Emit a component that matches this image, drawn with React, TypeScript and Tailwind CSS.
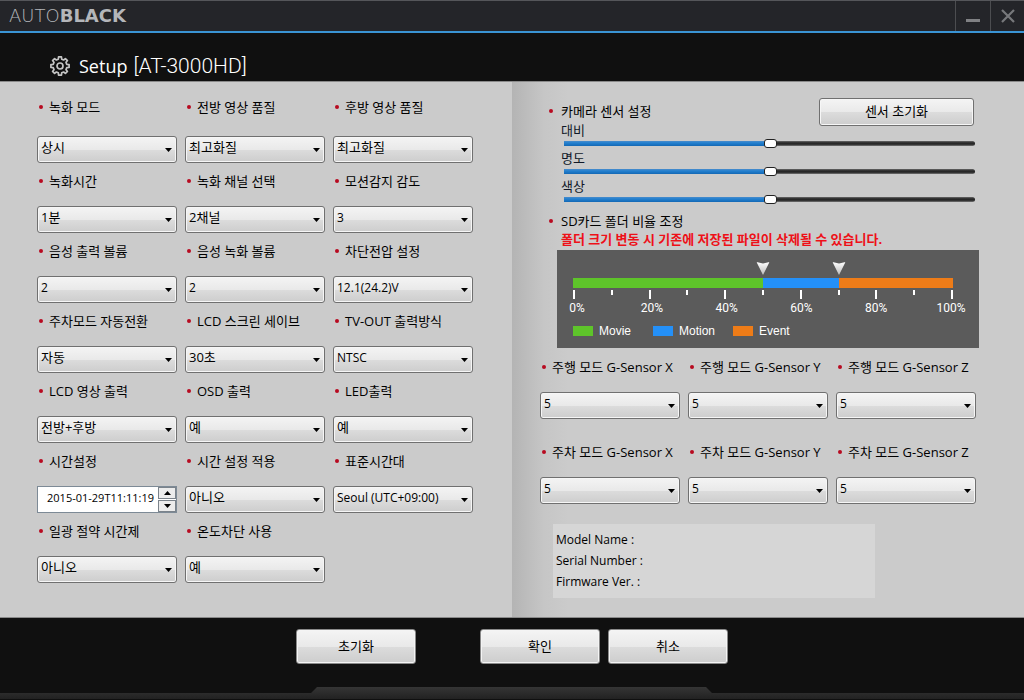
import { useId, useState } from 'react';

type Field = { label: string; options: string[] };

const LEFT_FIELDS: (Field | 'time')[] = [
  { label: '녹화 모드', options: ['상시', '이벤트'] },
  { label: '전방 영상 품질', options: ['최고화질', '고화질', '일반화질'] },
  { label: '후방 영상 품질', options: ['최고화질', '고화질', '일반화질'] },
  { label: '녹화시간', options: ['1분', '2분', '3분'] },
  { label: '녹화 채널 선택', options: ['2채널', '1채널'] },
  { label: '모션감지 감도', options: ['3', '1', '2', '4', '5'] },
  { label: '음성 출력 볼륨', options: ['2', '0', '1', '3'] },
  { label: '음성 녹화 볼륨', options: ['2', '0', '1', '3'] },
  { label: '차단전압 설정', options: ['12.1(24.2)V', '11.8(23.6)V'] },
  { label: '주차모드 자동전환', options: ['자동', '수동'] },
  { label: 'LCD 스크린 세이브', options: ['30초', '60초'] },
  { label: 'TV-OUT 출력방식', options: ['NTSC', 'PAL'] },
  { label: 'LCD 영상 출력', options: ['전방+후방', '전방', '후방'] },
  { label: 'OSD 출력', options: ['예', '아니오'] },
  { label: 'LED출력', options: ['예', '아니오'] },
  'time',
  { label: '시간 설정 적용', options: ['아니오', '예'] },
  { label: '표준시간대', options: ['Seoul (UTC+09:00)', 'London (UTC+00:00)'] },
  { label: '일광 절약 시간제', options: ['아니오', '예'] },
  { label: '온도차단 사용', options: ['예', '아니오'] },
];

const LEVELS = ['5', '1', '2', '3', '4'];
const DRIVING = ['주행 모드 G-Sensor X', '주행 모드 G-Sensor Y', '주행 모드 G-Sensor Z'];
const PARKING = ['주차 모드 G-Sensor X', '주차 모드 G-Sensor Y', '주차 모드 G-Sensor Z'];

const BUTTON_FACE =
  'bg-[linear-gradient(to_bottom,#f4f4f4_0%,#e9e9e9_50%,#dcdcdc_51%,#cdcdcd_100%)]';

function Bullet() {
  return <span className="size-1 shrink-0 rounded-full bg-[#b80a20]" />;
}

function SelectField({ label, options }: Field) {
  const id = useId();
  const hangul = /[가-힣]/.test(options[0]);
  return (
    <div className="flex min-w-0 flex-col gap-4">
      <label htmlFor={id} className="flex items-center gap-1.5 pl-0.5 text-[13px] leading-[18px] whitespace-nowrap">
        <Bullet />
        {label}
      </label>
      <div className="relative">
        <select
          id={id}
          className={`block h-[27px] w-full appearance-none rounded-[3px] border border-[#707070] pr-4 pb-[3px] pl-[3px] shadow-[inset_0_0_0_1px_#f6f6f6] ${BUTTON_FACE} ${hangul ? 'text-[13px]' : 'text-xs'}`}
        >
          {options.map((o) => (
            <option key={o}>{o}</option>
          ))}
        </select>
        <svg viewBox="0 0 7 4" className="pointer-events-none absolute top-3 right-[5px] h-1 w-[7px]">
          <path d="M0 0H7L3.5 4Z" fill="#000" />
        </svg>
      </div>
    </div>
  );
}

function TimeField() {
  const id = useId();
  return (
    <div className="flex min-w-0 flex-col gap-4">
      <label htmlFor={id} className="flex items-center gap-1.5 pl-0.5 text-[13px] leading-[18px] whitespace-nowrap">
        <Bullet />
        시간설정
      </label>
      <div className="flex h-[27px] border border-[#7d8a96] bg-white">
        <input
          id={id}
          type="text"
          defaultValue="2015-01-29T11:11:19"
          className="min-w-0 flex-1 bg-white pr-1 pb-[3px] text-right text-[11px] outline-none"
        />
        <div className="flex w-[18px] flex-col gap-px bg-white">
          <button aria-label="시간 증가" className="flex flex-1 items-center justify-center border border-[#7b838b] bg-[#ececec]">
            <svg viewBox="0 0 7 4" className="h-1 w-[7px]">
              <path d="M0 4H7L3.5 0Z" fill="#000" />
            </svg>
          </button>
          <button aria-label="시간 감소" className="flex flex-1 items-center justify-center border border-[#7b838b] bg-[#ececec]">
            <svg viewBox="0 0 7 4" className="h-1 w-[7px]">
              <path d="M0 0H7L3.5 4Z" fill="#000" />
            </svg>
          </button>
        </div>
      </div>
    </div>
  );
}

function SensorSlider({ label }: { label: string }) {
  const id = useId();
  const [value, setValue] = useState(50);
  return (
    <div className="flex flex-col gap-px">
      <label htmlFor={id} className="text-[13px] leading-4 text-[#101828]">
        {label}
      </label>
      <div className="relative flex h-[9px] items-center pr-px pl-[3px]">
        <div className="flex h-[5px] flex-1 rounded-r-full bg-[linear-gradient(to_bottom,#6b6b6b,#222_40%,#333_70%,#777)]">
          <div
            className="bg-[linear-gradient(to_bottom,#4a8ccb,#2280d0_40%,#1468b4)]"
            style={{ width: `${value}%` }}
          />
        </div>
        <input
          id={id}
          type="range"
          value={value}
          onChange={(e) => setValue(Number(e.target.value))}
          className="absolute inset-y-0 right-0 left-[3px] m-0 h-[9px] appearance-none bg-transparent [&::-webkit-slider-thumb]:h-[9px] [&::-webkit-slider-thumb]:w-[13px] [&::-webkit-slider-thumb]:appearance-none [&::-webkit-slider-thumb]:rounded-[3px] [&::-webkit-slider-thumb]:border [&::-webkit-slider-thumb]:border-[#222] [&::-webkit-slider-thumb]:bg-white"
        />
      </div>
    </div>
  );
}

function Marker({ className }: { className: string }) {
  return (
    <svg viewBox="0 0 13 13" className={`absolute top-3 size-[13px] -translate-x-1/2 ${className}`}>
      <defs>
        <linearGradient id="marker" x1="0" y1="0" x2="0" y2="1">
          <stop offset="0" stopColor="#fff" />
          <stop offset="1" stopColor="#bbb" />
        </linearGradient>
      </defs>
      <path d="M0 0L6.5 1.5L13 0L6.5 13Z" fill="url(#marker)" />
    </svg>
  );
}

function FolderRatio() {
  return (
    <div className="relative mt-0.5 flex h-[98px] flex-col bg-[#5b5b5b] pt-7 text-white">
      <div className="absolute inset-x-0 top-0 mr-[26px] ml-4">
        <Marker className="left-1/2" />
        <Marker className="left-[70%]" />
      </div>
      <div className="mr-[26px] ml-4 flex h-[10px]">
        <div className="w-1/2 bg-[#5ec42a]" />
        <div className="w-1/5 bg-[#2490f8]" />
        <div className="flex-1 bg-[#ee7c18]" />
      </div>
      <div className="mt-0.5 mr-[26px] ml-4 flex h-[9px] justify-between">
        {Array.from({ length: 11 }, (_, i) => (
          <span key={i} className={`w-0.5 bg-white ${i % 2 ? 'h-[5px]' : 'h-[9px]'}`} />
        ))}
      </div>
      <div className="mt-px mr-3 ml-1 flex justify-between font-['Roboto',sans-serif] text-xs leading-4">
        {[0, 20, 40, 60, 80, 100].map((n) => (
          <span key={n} className="w-8 text-center">
            {n}%
          </span>
        ))}
      </div>
      <div className="mt-2 ml-4 flex font-['Liberation_Sans',sans-serif] text-xs leading-[14px]">
        <span className="flex w-20 items-center gap-1.5">
          <i className="h-[10px] w-5 bg-[#5ec42a]" />
          Movie
        </span>
        <span className="flex w-20 items-center gap-1.5">
          <i className="h-[10px] w-5 bg-[#2490f8]" />
          Motion
        </span>
        <span className="flex w-20 items-center gap-1.5">
          <i className="h-[10px] w-5 bg-[#ee7c18]" />
          Event
        </span>
      </div>
    </div>
  );
}

function gearPath() {
  const points: string[] = [];
  for (let i = 0; i < 8; i++) {
    const steps: [number, number][] = [
      [-14, 7],
      [-9, 9.2],
      [9, 9.2],
      [14, 7],
    ];
    for (const [offset, radius] of steps) {
      const a = ((i * 45 + offset) * Math.PI) / 180;
      points.push(`${(10 + radius * Math.sin(a)).toFixed(2)} ${(10 - radius * Math.cos(a)).toFixed(2)}`);
    }
  }
  return `M${points.join('L')}Z`;
}

function Gear() {
  return (
    <svg viewBox="0 0 20 20" className="size-5" fill="none" stroke="#c4c4c4" strokeWidth="1.7" strokeLinejoin="round">
      <path d={gearPath()} />
      <circle cx="10" cy="10" r="3" />
    </svg>
  );
}

function FooterButton({ children }: { children: string }) {
  return (
    <button className={`h-[35px] w-[120px] rounded-[3px] border border-[#8a8a8a] text-[13px] shadow-[inset_0_0_0_1px_#f4f4f4] ${BUTTON_FACE}`}>
      {children}
    </button>
  );
}

export default function App() {
  return (
    <div className="flex min-h-screen flex-col bg-[#101010] font-['Open_Sans','Noto_Sans_CJK_KR',sans-serif] text-black">
      <header className="flex h-[33px] border-t border-b-2 border-t-[#55565a] border-b-[#3a94d4] bg-[#242529]">
        <div className="flex flex-1 items-center pb-px pl-[9px] font-['DejaVu_Sans',sans-serif] text-lg leading-5 text-[#b4b6ba]">
          <span className="font-extralight">AUTO</span>
          <span className="font-bold">BLACK</span>
        </div>
        <button aria-label="최소화" className="flex w-[35px] items-center justify-center border-l border-[#4c4d50]">
          <svg viewBox="0 0 14 14" className="mt-1 size-[14px]">
            <path d="M0 8H14V11H0Z" fill="#808184" />
          </svg>
        </button>
        <button aria-label="닫기" className="flex w-[34px] items-center justify-center border-l border-[#4c4d50]">
          <svg viewBox="0 0 14 14" className="size-[14px]">
            <path d="M1 1L13 13M13 1L1 13" stroke="#77787b" strokeWidth="2.2" />
          </svg>
        </button>
      </header>

      <div className="flex h-12 items-end gap-[9px] pb-[5px] pl-[50px] text-white">
        <Gear />
        <h1 className="flex items-baseline gap-1.5 text-lg leading-5">
          <span>Setup</span>
          <span className="font-['Roboto',sans-serif] text-[21px] leading-5 font-light">[AT-3000HD]</span>
        </h1>
      </div>

      <main className="flex flex-1 border-y border-[#8a8a8a] bg-[#cbcbcb]">
        <section className="w-1/2 pt-4 pr-[39px] pl-[37px]">
          <div className="grid grid-cols-3 gap-x-2 gap-y-[9px] [&>*:nth-child(-n+3)]:gap-5">
            {LEFT_FIELDS.map((f) => (f === 'time' ? <TimeField key="time" /> : <SelectField key={f.label} {...f} />))}
          </div>
        </section>

        <section className="w-1/2 bg-[linear-gradient(to_right,#b4b4b4,#c6c6c6_32px,#cbcbcb_56px)] pt-4 pr-[45px] pl-7">
          <div className="flex items-start justify-between pr-[5px] pl-[9px]">
            <h2 className="flex items-center gap-2 pt-1 text-[13px] leading-[18px]">
              <Bullet />
              카메라 센서 설정
            </h2>
            <button className={`h-7 w-[155px] rounded-[3px] border border-[#707070] text-[13px] shadow-[inset_0_0_0_1px_#f6f6f6] ${BUTTON_FACE}`}>
              센서 초기화
            </button>
          </div>
          <div className="-mt-1 flex flex-col gap-0.5 pr-[3px] pl-[21px]">
            <SensorSlider label="대비" />
            <SensorSlider label="명도" />
            <SensorSlider label="색상" />
          </div>
          <h2 className="mt-2 flex items-center gap-2 pl-[9px] text-[13px] leading-[18px]">
            <Bullet />
            SD카드 폴더 비율 조정
          </h2>
          <p className="pl-[21px] text-[13px] leading-[18px] font-bold text-[#ee1018]">
            폴더 크기 변동 시 기존에 저장된 파일이 삭제될 수 있습니다.
          </p>
          <div className="pl-[17px]">
            <FolderRatio />
          </div>
          <div className="mt-[10px] mr-[3px] grid grid-cols-3 gap-x-2 gap-y-6">
            {[...DRIVING, ...PARKING].map((label) => (
              <SelectField key={label} label={label} options={LEVELS} />
            ))}
          </div>
          <dl className="mt-5 mr-[104px] ml-[13px] flex h-[74px] flex-col bg-[#d6d6d6] pt-[5px] pl-[3px] text-xs leading-[21px]">
            <dt>Model Name :</dt>
            <dt>Serial Number :</dt>
            <dt>Firmware Ver. :</dt>
          </dl>
        </section>
      </main>

      <footer className="flex flex-col">
        <div className="flex justify-center gap-16 pt-[11px] pb-[23px]">
          <FooterButton>초기화</FooterButton>
          <div className="flex gap-2">
            <FooterButton>확인</FooterButton>
            <FooterButton>취소</FooterButton>
          </div>
        </div>
        <svg viewBox="0 0 1024 13" preserveAspectRatio="none" className="block h-[13px] w-full">
          <defs>
            <linearGradient id="strip" x1="0" y1="0" x2="0" y2="1">
              <stop offset="0" stopColor="#353535" />
              <stop offset="1" stopColor="#222" />
            </linearGradient>
          </defs>
          <path d="M0 6H311L317 0H706L712 6H1024V12H0Z" fill="url(#strip)" />
        </svg>
      </footer>
    </div>
  );
}
